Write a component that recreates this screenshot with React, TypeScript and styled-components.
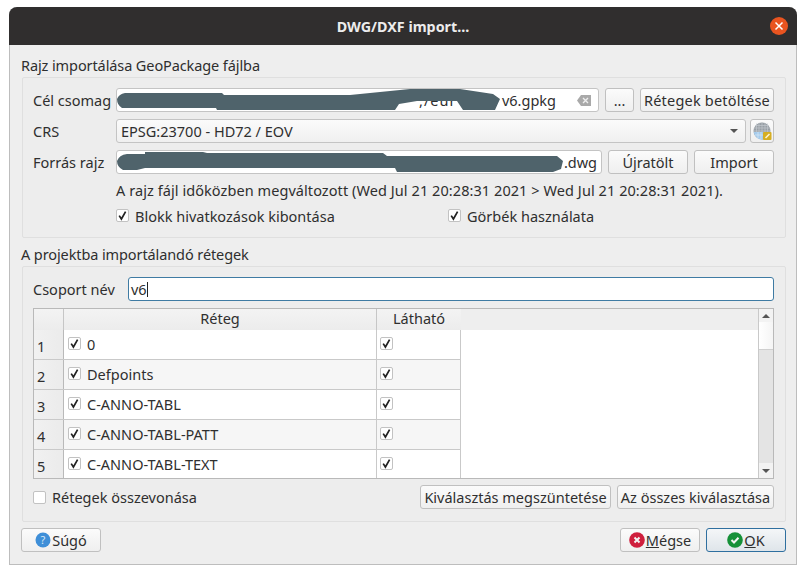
import React from "react";
import styled, { createGlobalStyle } from "styled-components";

const GlobalStyle = createGlobalStyle`
    html, body {
        margin: 0;
        padding: 0;
        background: #ffffff;
    }
    body {
        font-family: "Noto Sans", "Open Sans", sans-serif;
        font-size: 14.5px;
        color: #2f2f2f;
    }
`;

const Dialog = styled.div`
    box-sizing: border-box;
    width: 788px;
    height: 558px;
    margin: 7px 0 0 9px;
    display: flex;
    flex-direction: column;
    background: #eeeeee;
    border: 1px solid #bdbdbd;
    border-top: none;
    border-radius: 8px 8px 0 0;
`;

const TitleBar = styled.div`
    position: relative;
    height: 38px;
    margin: 0 -1px;
    flex: none;
    display: flex;
    align-items: center;
    justify-content: center;
    background: #302e2e;
    border-radius: 8px 8px 0 0;
    color: #ececec;
    font-weight: 700;
    font-size: 14.3px;
`;

const CloseButton = styled.div`
    position: absolute;
    right: 9px;
    top: 10px;
    width: 18px;
    height: 18px;
    border-radius: 50%;
    background: #e95420;
    display: flex;
    align-items: center;
    justify-content: center;
`;

const Content = styled.div`
    flex: 1;
    display: flex;
    flex-direction: column;
    padding: 11px 10px 0 11px;
`;

const GroupTitle = styled.div`
    height: 21px;
    line-height: 19px;
    flex: none;
    letter-spacing: -0.1px;
`;

const GroupBox = styled.div<{ $height: number }>`
    box-sizing: border-box;
    height: ${(p) => p.$height}px;
    flex: none;
    margin-left: 1px;
    padding: 10px 11px 0 10px;
    display: flex;
    flex-direction: column;
    gap: 7px;
    border: 1px solid #dfdfdf;
    border-radius: 2px;
    background: #ededed;
`;

const Row = styled.div<{ $gap?: number }>`
    display: flex;
    align-items: center;
    height: 24px;
    flex: none;
    gap: ${(p) => p.$gap ?? 7}px;
`;

const FieldLabel = styled.div<{ $width: number }>`
    width: ${(p) => p.$width}px;
    flex: none;
    white-space: nowrap;
`;

const Field = styled.div<{ $width?: number; $focused?: boolean }>`
    box-sizing: border-box;
    position: relative;
    width: ${(p) => (p.$width ? `${p.$width}px` : "auto")};
    flex: ${(p) => (p.$width ? "none" : 1)};
    height: 24px;
    display: flex;
    align-items: center;
    padding: 0 4px 0 ${(p) => (p.$focused ? 2 : 4)}px;
    overflow: hidden;
    background: #ffffff;
    border: 1px solid ${(p) => (p.$focused ? "#3f7ba3" : "#c4c4c4")};
    border-radius: 3px;
`;

const FieldEnd = styled.span`
    margin-left: auto;
`;

const ClearIcon = styled.svg`
    margin-left: 21px;
    margin-right: 3px;
    flex: none;
`;

const Scribble = styled.svg`
    position: absolute;
    left: 0;
    top: 0;
`;

const Caret = styled.span`
    width: 1px;
    height: 15px;
    background: #222222;
`;

const Combo = styled.div`
    box-sizing: border-box;
    flex: 1;
    height: 24px;
    display: flex;
    align-items: center;
    justify-content: space-between;
    padding: 0 7px 0 4px;
    border: 1px solid #c4c4c4;
    border-radius: 3px;
    background: linear-gradient(#fbfbfb, #f0f0f0);
`;

const ComboArrow = styled.span`
    width: 0;
    height: 0;
    border-left: 4px solid transparent;
    border-right: 4px solid transparent;
    border-top: 4px solid #555555;
`;

const Button = styled.div<{ $width: number; $isDefault?: boolean; $tracking?: number }>`
    box-sizing: border-box;
    width: ${(p) => p.$width}px;
    height: 24px;
    flex: none;
    display: flex;
    align-items: center;
    justify-content: center;
    white-space: nowrap;
    letter-spacing: ${(p) => p.$tracking ?? 0}px;
    border: 1px solid ${(p) => (p.$isDefault ? "#2f6f9f" : "#c0c0c0")};
    border-radius: 3px;
    background: ${(p) =>
        p.$isDefault
            ? "linear-gradient(#f4f6f8, #dfe5ea)"
            : "linear-gradient(#fbfbfb, #efefef)"};
`;

const Note = styled.div`
    height: 19px;
    margin-left: 83px;
    line-height: 19px;
    white-space: nowrap;
    letter-spacing: 0.07px;
`;

const CheckRow = styled.div`
    display: flex;
    margin: -1px 0 0 83px;
`;

const CheckItem = styled.label<{ $width?: number }>`
    display: flex;
    align-items: center;
    gap: 6px;
    height: 19px;
    width: ${(p) => (p.$width ? `${p.$width}px` : "auto")};
`;

const Box = styled.span`
    box-sizing: border-box;
    width: 13px;
    height: 13px;
    flex: none;
    display: flex;
    align-items: center;
    justify-content: center;
    background: #ffffff;
    border: 1px solid #c2c2c2;
    border-radius: 2px;
`;

const Spacer = styled.div`
    height: 7px;
    flex: none;
`;

const TableFrame = styled.div`
    box-sizing: border-box;
    height: 171px;
    flex: none;
    margin-bottom: -1px;
    display: flex;
    background: #ffffff;
    border: 1px solid #b9b9b9;
`;

const TableArea = styled.div`
    flex: 1;
    display: flex;
    flex-direction: column;
`;

const HeaderRow = styled.div`
    height: 21px;
    flex: none;
    display: grid;
    grid-template-columns: 30px 313px 84px;
    background: #eeeeee;
`;

const HeaderCell = styled.div`
    box-sizing: border-box;
    display: flex;
    align-items: center;
    justify-content: center;
    padding-bottom: 2px;
    line-height: 19px;
    background: linear-gradient(#f3f3f3, #ececec);
    border-right: 1px solid #c6c6c6;
    border-bottom: 1px solid #b9b9b9;

    &:last-child {
        border-right: none;
    }
`;

const BodyRow = styled.div<{ $alt: boolean; $short: boolean }>`
    box-sizing: border-box;
    width: 427px;
    height: ${(p) => (p.$short ? 28 : 30)}px;
    flex: none;
    overflow: hidden;
    display: grid;
    grid-template-columns: 30px 313px 84px;
    grid-template-rows: 29px;
    background: ${(p) => (p.$alt ? "#f6f6f6" : "#ffffff")};
    border-bottom: ${(p) => (p.$short ? "none" : "1px solid #c9c9c9")};
`;

const RowHeader = styled.div`
    box-sizing: border-box;
    display: flex;
    align-items: center;
    padding: 2px 0 0 3px;
    background: linear-gradient(90deg, #f1f1f1, #ebebeb);
    border-right: 1px solid #b9b9b9;
`;

const LayerCell = styled.div`
    box-sizing: border-box;
    display: flex;
    align-items: center;
    gap: 6px;
    padding: 0 0 2px 4px;
    border-right: 1px solid #c9c9c9;
`;

const VisibleCell = styled(LayerCell)`
    padding-left: 3px;
`;

const ScrollBar = styled.div`
    width: 14px;
    flex: none;
    display: flex;
    flex-direction: column;
    border-left: 1px solid #c9c9c9;
`;

const ScrollButton = styled.div<{ $height: number }>`
    height: ${(p) => p.$height}px;
    flex: none;
    display: flex;
    align-items: center;
    justify-content: center;
    background: #f3f3f3;
`;

const ScrollHandle = styled.div`
    height: 27px;
    flex: none;
    background: linear-gradient(90deg, #ffffff, #f5f5f5);
    border-bottom: 1px solid #cfcfcf;
`;

const ScrollTrack = styled.div`
    flex: 1;
    background: #e4e4e4;
`;

const ScrollArrow = styled.span<{ $up?: boolean }>`
    width: 0;
    height: 0;
    border-left: 4px solid transparent;
    border-right: 4px solid transparent;
    ${(p) =>
        p.$up ? "border-bottom: 4px solid #555555;" : "border-top: 4px solid #555555;"}
`;

const Stretch = styled.div`
    flex: 1;
`;

const Footer = styled.div`
    display: flex;
    align-items: center;
    justify-content: space-between;
    margin: 6px 0 0 0;
`;

const FooterRight = styled.div`
    display: flex;
    gap: 6px;
`;

const Underlined = styled.span`
    text-decoration: underline;
`;

const ButtonIcon = styled.svg`
    flex: none;
    margin-right: 1px;
`;

const Check = () => (
    <Box>
        <svg width="11" height="11" viewBox="0 0 11 11">
            <path d="M2.2 5.6 L4.4 9 L8.6 1.6" fill="none" stroke="#222222" strokeWidth="1.7" />
        </svg>
    </Box>
);

const layers = ["0", "Defpoints", "C-ANNO-TABL", "C-ANNO-TABL-PATT", "C-ANNO-TABL-TEXT"];

const App: React.FC = () => {
    return (
        <>
            <GlobalStyle />
            <Dialog>
                <TitleBar>
                    DWG/DXF import...
                    <CloseButton>
                        <svg width="10" height="10" viewBox="0 0 10 10">
                            <path d="M1.5 1.5 L8.5 8.5 M8.5 1.5 L1.5 8.5" stroke="#ffffff" strokeWidth="1.5" />
                        </svg>
                    </CloseButton>
                </TitleBar>
                <Content>
                    <GroupTitle>Rajz importálása GeoPackage fájlba</GroupTitle>
                    <GroupBox $height={161}>
                        <Row $gap={6}>
                            <FieldLabel $width={77}>Cél csomag</FieldLabel>
                            <Field $width={483}>
                                <Scribble width="400" height="24">
                                    <text x="302" y="17" fontSize="14.5" letterSpacing="1" fill="#2f2f2f">,/eur</text>
                                    <path
                                        d="M0 10 Q2 5 8 4 L105 4 L107 6 L233 6 L293 0 L343 0 L376 5 L383 10 L378 21 L346 21 L340 12 L300 12 L282 15 L278 21 L100 21 L99 19 L5 19 Q0 16 0 10 Z"
                                        fill="#4f636b"
                                    />
                                </Scribble>
                                <FieldEnd>v6.gpkg</FieldEnd>
                                <ClearIcon width="14" height="11" viewBox="0 0 14 11">
                                    <path d="M0 5.5 L4 0 H14 V11 H4 Z" fill="#a9a9a9" />
                                    <path d="M6 3 L11 8 M11 3 L6 8" stroke="#eeeeee" strokeWidth="1.4" />
                                </ClearIcon>
                            </Field>
                            <Button $width={29}>...</Button>
                            <Button $width={134} $tracking={0.2}>Rétegek betöltése</Button>
                        </Row>
                        <Row $gap={4}>
                            <FieldLabel $width={79}>CRS</FieldLabel>
                            <Combo>
                                EPSG:23700 - HD72 / EOV
                                <ComboArrow />
                            </Combo>
                            <Button $width={24}>
                                <svg width="19" height="19" viewBox="0 0 19 19">
                                    <circle cx="9" cy="9" r="8.5" fill="#989fa5" />
                                    <path d="M1 6 H17 M1 9 H17 M2 3.5 H16 M6 1 V13 M9 0.5 V13 M12 1 V13 M3.5 1.5 V13 M14.5 1.5 V10" stroke="#c3c9ce" strokeWidth="0.7" />
                                    <path d="M0.7 10 H11 V17.4 A8.5 8.5 0 0 1 0.7 10 Z" fill="#a5cbec" />
                                    <path d="M2 13 H11 M5 10 V16.5 M8 10 V17.4" stroke="#d7e8f6" strokeWidth="0.7" />
                                    <rect x="10" y="10" width="8.5" height="8" rx="1" fill="#d6ae22" />
                                    <path d="M12.5 16 L16.5 12" stroke="#fff6d0" strokeWidth="1.6" />
                                </svg>
                            </Button>
                        </Row>
                        <Row $gap={6}>
                            <FieldLabel $width={77}>Forrás rajz</FieldLabel>
                            <Field $width={486}>
                                <Scribble width="470" height="24">
                                    <path
                                        d="M0 10 Q2 4 10 3 L28 3 L28 1 L86 1 L90 2 L266 2 L270 5 L440 5 L446 10 L444 18 L436 21 L280 21 L278 17 L28 17 L20 19 L6 19 Q0 16 0 10 Z"
                                        fill="#4f636b"
                                    />
                                </Scribble>
                                <FieldEnd>.dwg</FieldEnd>
                            </Field>
                            <Button $width={80}>Újratölt</Button>
                            <Button $width={80}>Import</Button>
                        </Row>
                        <Note>A rajz fájl időközben megváltozott (Wed Jul 21 20:28:31 2021 &gt; Wed Jul 21 20:28:31 2021).</Note>
                        <CheckRow>
                            <CheckItem $width={332}>
                                <Check />
                                Blokk hivatkozások kibontása
                            </CheckItem>
                            <CheckItem>
                                <Check />
                                Görbék használata
                            </CheckItem>
                        </CheckRow>
                    </GroupBox>
                    <Spacer />
                    <GroupTitle>A projektba importálandó rétegek</GroupTitle>
                    <GroupBox $height={256}>
                        <Row $gap={0}>
                            <FieldLabel $width={95}>Csoport név</FieldLabel>
                            <Field $focused>
                                v6
                                <Caret />
                            </Field>
                        </Row>
                        <TableFrame>
                            <TableArea>
                                <HeaderRow>
                                    <HeaderCell />
                                    <HeaderCell>Réteg</HeaderCell>
                                    <HeaderCell>Látható</HeaderCell>
                                </HeaderRow>
                                {layers.map((name, i) => (
                                    <BodyRow key={name} $alt={i % 2 === 1} $short={i === layers.length - 1}>
                                        <RowHeader>{i + 1}</RowHeader>
                                        <LayerCell>
                                            <Check />
                                            {name}
                                        </LayerCell>
                                        <VisibleCell>
                                            <Check />
                                        </VisibleCell>
                                    </BodyRow>
                                ))}
                            </TableArea>
                            <ScrollBar>
                                <ScrollButton $height={13}>
                                    <ScrollArrow $up />
                                </ScrollButton>
                                <ScrollHandle />
                                <ScrollTrack />
                                <ScrollButton $height={15}>
                                    <ScrollArrow />
                                </ScrollButton>
                            </ScrollBar>
                        </TableFrame>
                        <Row $gap={6}>
                            <CheckItem>
                                <Box />
                                Rétegek összevonása
                            </CheckItem>
                            <Stretch />
                            <Button $width={191}>Kiválasztás megszüntetése</Button>
                            <Button $width={157}>Az összes kiválasztása</Button>
                        </Row>
                    </GroupBox>
                    <Footer>
                        <Button $width={80}>
                            <ButtonIcon width="16" height="16" viewBox="0 0 16 16">
                                <circle cx="8" cy="8" r="7.5" fill="#3f8fd8" />
                                <text x="8" y="12" textAnchor="middle" fontSize="11" fill="#d8e8f6" fontFamily="Noto Sans">?</text>
                            </ButtonIcon>
                            Súgó
                        </Button>
                        <FooterRight>
                            <Button $width={80}>
                                <ButtonIcon width="16" height="16" viewBox="0 0 16 16">
                                    <circle cx="8" cy="8" r="7.8" fill="#cf1f3d" />
                                    <path d="M5.5 5.5 L10.5 10.5 M10.5 5.5 L5.5 10.5" stroke="#f3f3f3" strokeWidth="2" />
                                </ButtonIcon>
                                <span><Underlined>M</Underlined>égse</span>
                            </Button>
                            <Button $width={80} $isDefault>
                                <ButtonIcon width="16" height="16" viewBox="0 0 16 16">
                                    <circle cx="8" cy="8" r="7.8" fill="#159038" />
                                    <path d="M4.5 8 L7 10.5 L11.5 5.8" fill="none" stroke="#f3f3f3" strokeWidth="2" />
                                </ButtonIcon>
                                <span><Underlined>O</Underlined>K</span>
                            </Button>
                        </FooterRight>
                    </Footer>
                </Content>
            </Dialog>
        </>
    );
};

export default App;
